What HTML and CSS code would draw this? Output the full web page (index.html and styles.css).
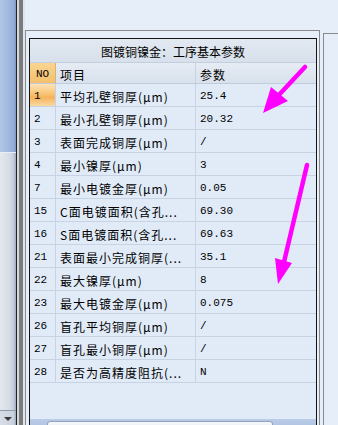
FILE: index.html
```html
<!DOCTYPE html>
<html>
<head>
<meta charset="utf-8">
<link rel="stylesheet" href="styles.css">
</head>
<body>
<div class="screen">
  <div class="vscroll">
    <div class="vs-thumb"></div>
    <div class="vs-track"></div>
    <div class="vs-btn"><span class="tri"></span></div>
  </div>
  <div class="splitter"></div>
  <div class="content">
    <div class="top-strip"></div>
    <div class="panels">
      <div class="group-left">
        <div class="grid">
          <div class="title">图镀铜镍金：工序基本参数</div>
          <div class="row head">
            <div class="c no hno">NO</div>
            <div class="c item">项目</div>
            <div class="c val hval">参数</div>
          </div>
          <div class="row">
            <div class="c no sel">1</div>
            <div class="c item">平均孔壁铜厚(μm)</div>
            <div class="c val">25.4</div>
          </div>
          <div class="row">
            <div class="c no">2</div>
            <div class="c item">最小孔壁铜厚(μm)</div>
            <div class="c val">20.32</div>
          </div>
          <div class="row">
            <div class="c no">3</div>
            <div class="c item">表面完成铜厚(μm)</div>
            <div class="c val">/</div>
          </div>
          <div class="row">
            <div class="c no">4</div>
            <div class="c item">最小镍厚(μm)</div>
            <div class="c val">3</div>
          </div>
          <div class="row">
            <div class="c no">7</div>
            <div class="c item">最小电镀金厚(μm)</div>
            <div class="c val">0.05</div>
          </div>
          <div class="row">
            <div class="c no">15</div>
            <div class="c item">C面电镀面积(含孔...</div>
            <div class="c val">69.30</div>
          </div>
          <div class="row">
            <div class="c no">16</div>
            <div class="c item">S面电镀面积(含孔...</div>
            <div class="c val">69.63</div>
          </div>
          <div class="row">
            <div class="c no">21</div>
            <div class="c item">表面最小完成铜厚(...</div>
            <div class="c val">35.1</div>
          </div>
          <div class="row">
            <div class="c no">22</div>
            <div class="c item">最大镍厚(μm)</div>
            <div class="c val">8</div>
          </div>
          <div class="row">
            <div class="c no">23</div>
            <div class="c item">最大电镀金厚(μm)</div>
            <div class="c val">0.075</div>
          </div>
          <div class="row">
            <div class="c no">26</div>
            <div class="c item">盲孔平均铜厚(μm)</div>
            <div class="c val">/</div>
          </div>
          <div class="row">
            <div class="c no">27</div>
            <div class="c item">盲孔最小铜厚(μm)</div>
            <div class="c val">/</div>
          </div>
          <div class="row">
            <div class="c no">28</div>
            <div class="c item">是否为高精度阻抗(...</div>
            <div class="c val">N</div>
          </div>
          <div class="filler"></div>
          <div class="hscroll">
            <div class="hs-btn"></div>
            <div class="hs-thumb"></div>
          </div>
        </div>
      </div>
      <div class="group-right"></div>
    </div>
  </div>
  <svg class="annot" width="338" height="425" viewBox="0 0 338 425">
    <line x1="305" y1="67" x2="277" y2="97" stroke="#ff00ff" stroke-width="4.5" stroke-linecap="round"/>
    <polygon points="271,87 288,101 263,113" fill="#ff00ff"/>
    <line x1="307" y1="165" x2="284" y2="262" stroke="#ff00ff" stroke-width="4.5" stroke-linecap="round"/>
    <polygon points="275,258 292,263 278,284" fill="#ff00ff"/>
  </svg>
</div>
</body>
</html>
```

FILE: styles.css
```css
* { box-sizing: border-box; }
html, body { margin: 0; padding: 0; }
body {
  width: 338px;
  height: 425px;
  overflow: hidden;
  background: #e6eef9;
  font-family: "Noto Sans CJK SC", "Liberation Sans", sans-serif;
  font-size: 12px;
  color: #000;
}
.screen {
  position: relative;
  display: flex;
  width: 338px;
  height: 425px;
  overflow: hidden;
}
.vscroll {
  width: 16px;
  height: 425px;
  display: flex;
  flex-direction: column;
  flex: none;
}
.vs-thumb {
  height: 152px;
  background: linear-gradient(to right, #b2c7e5 0%, #a2bae0 50%, #93add6 85%, #7e97c0 100%);
}
.vs-track {
  flex: 1;
  margin-top: 1px;
  border-top-left-radius: 3px;
  background: linear-gradient(to right, #e4e8ee 0%, #d6dce5 60%, #c4ccd8 85%, #9aa8bc 100%);
}
.vs-btn {
  height: 15px;
  border-top: 1px solid #8e9aac;
  background: linear-gradient(to right, #d8dee7 0%, #c9d1dc 85%, #9aa8bc 100%);
  position: relative;
}
.tri {
  position: absolute;
  left: 4px;
  top: 6px;
  width: 0;
  height: 0;
  border-left: 4px solid transparent;
  border-right: 4px solid transparent;
  border-top: 4px solid #3c3c3c;
}
.splitter {
  width: 9px;
  flex: none;
  background: linear-gradient(to right, #222 0 1px, #d3d9e1 1px 3px, #7b7b7b 3px 7px, #dfe5ee 7px 9px);
}
.content {
  flex: 1;
  display: flex;
  flex-direction: column;
  background: #e6eef9;
}
.top-strip { height: 30px; flex: none; }
.panels {
  flex: 1;
  display: flex;
}
.group-left {
  width: 295px;
  flex: none;
  border: 1px solid #8a8a8a;
  border-bottom: none;
  padding: 7px 2px 0 3px;
}
.group-right {
  flex: 1;
  margin-left: 3px;
  margin-top: 3px;
  border-top: 1px solid #8a8a8a;
  border-left: 1px solid #8a8a8a;
}
.grid {
  width: 288px;
  border: 1px solid #151515;
  border-bottom: none;
  background: #e1ebf8;
  display: flex;
  flex-direction: column;
}
.title {
  height: 24px;
  border-bottom: 1px solid #c3cfdf;
  background: linear-gradient(to bottom, #e3e9f1, #d7e0eb);
  display: flex;
  align-items: center;
  justify-content: center;
  padding-top: 1px;
}
.row {
  display: flex;
  height: 23px;
  border-bottom: 1px solid #c7d3e3;
}
.row.head { height: 21px; border-bottom-color: #c0ccdc; }
.c {
  display: flex;
  align-items: center;
  padding-left: 4px;
  padding-top: 2px;
  white-space: nowrap;
  overflow: hidden;
}
.no {
  width: 26px;
  flex: none;
  border-right: 1px solid #c7d3e3;
  font-family: "Liberation Mono", monospace;
  font-size: 11px;
}
.item {
  width: 140px;
  flex: none;
  border-right: 1px solid #c7d3e3;
  letter-spacing: 1px;
}
.val {
  flex: 1;
  font-family: "Liberation Mono", monospace;
  font-size: 11px;
}
.head .c {
  background: linear-gradient(to bottom, #e6ecf4, #d8e1ec);
}
.head .hno {
  background: linear-gradient(to bottom, #f9d592, #f4c06e);
  justify-content: center;
  padding-left: 0;
  border-right-color: #d9b27a;
}
.head .hval {
  font-family: "Noto Sans CJK SC", sans-serif;
  font-size: 12px;
  letter-spacing: 1px;
}
.no.sel {
  background: linear-gradient(to bottom, #fde3b8 0%, #f8c474 45%, #f5b35a 60%, #fad8a2 100%);
}
.filler { height: 36px; flex: none; }
.hscroll {
  height: 17px;
  flex: none;
  display: flex;
  background: linear-gradient(to bottom, #b9cbe6, #a7bfe0);
}
.hs-btn {
  width: 17px;
  flex: none;
}
.hs-thumb {
  width: 226px;
  flex: none;
  margin-top: 2px;
  border: 1px solid #93a2b8;
  border-radius: 3px;
  background: linear-gradient(to bottom, #f4f7fb, #dfe6ef);
}
.annot {
  position: absolute;
  left: 0;
  top: 0;
  pointer-events: none;
}
```
